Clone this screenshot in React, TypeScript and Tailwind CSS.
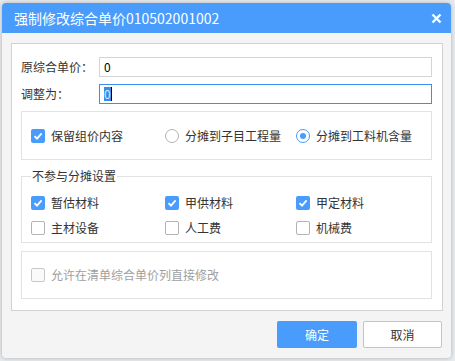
import type { ReactNode } from "react";

const font = { fontFamily: '"Microsoft YaHei", "Noto Sans CJK SC", "Noto Sans", sans-serif' };

function Check({ checked, disabled }: { checked?: boolean; disabled?: boolean }) {
  if (checked) {
    return (
      <span className="w-[14px] h-[14px] rounded-[2px] bg-[#4a9cfc] flex items-center justify-center shrink-0">
        <svg width="10" height="10" viewBox="0 0 10 10">
          <path d="M1.5 5.2 L4 7.6 L8.6 2.4" fill="none" stroke="#fff" strokeWidth="1.8" />
        </svg>
      </span>
    );
  }
  return (
    <span
      className={`w-[14px] h-[14px] rounded-[2px] border shrink-0 ${
        disabled ? "border-[#c8c8c8] bg-[#fafafa]" : "border-[#b4b4b4] bg-white"
      }`}
    />
  );
}

function Radio({ checked }: { checked?: boolean }) {
  return (
    <span
      className={`w-[14px] h-[14px] rounded-full border flex items-center justify-center shrink-0 ${
        checked ? "border-[#4a9cfc]" : "border-[#b4b4b4]"
      } bg-white`}
    >
      {checked && <span className="w-[6px] h-[6px] rounded-full bg-[#4a9cfc]" />}
    </span>
  );
}

function Item({ box, label, disabled }: { box: ReactNode; label: string; disabled?: boolean }) {
  return (
    <div className="flex items-center gap-[6px] h-[16px]">
      {box}
      <span className={`text-[12px] leading-none ${disabled ? "text-[#a0a0a0]" : "text-[#333]"}`}>{label}</span>
    </div>
  );
}

export default function App() {
  return (
    <div className="w-[455px] h-[361px] bg-[#e8ebee] pt-[3px] pl-[2px]" style={font}>
      <div className="w-[449px] h-[355px] rounded-[4px] bg-[#f4f4f4] shadow-[0_0_4px_rgba(0,0,0,0.25)] flex flex-col overflow-hidden">
        <header className="h-[30px] bg-[#4a9cfc] flex items-center justify-between pl-[12px] pr-[9px]">
          <span className="text-white text-[14px] leading-none">强制修改综合单价010502001002</span>
          <svg width="11" height="11" viewBox="0 0 11 11">
            <path d="M1.5 1.5 L9.5 9.5 M9.5 1.5 L1.5 9.5" stroke="#fff" strokeWidth="2.4" />
          </svg>
        </header>

        <div className="pt-[10px] pl-[9px] pr-[8px]">
          <div className="h-[268px] bg-white border border-[#d2d2d2] pt-[13px] pl-[9px] pr-[10px]">
            <div className="flex items-center h-[20px]">
              <span className="w-[78px] text-[12px] text-[#333]">原综合单价：</span>
              <div className="flex-1 h-[20px] border border-[#d4d4d4] flex items-center pl-[4px] text-[12px] text-black">
                0
              </div>
            </div>
            <div className="flex items-center h-[20px] mt-[7px]">
              <span className="w-[78px] text-[12px] text-[#333]">调整为：</span>
              <div className="flex-1 h-[20px] border border-[#3c8ef0] flex items-center pl-[4px] text-[12px]">
                <span className="bg-[#3a8ee6] text-[#dbe9ff] leading-[14px]">0</span>
                <span className="w-px h-[14px] bg-black" />
              </div>
            </div>

            <div className="mt-[7px] h-[49px] border border-[#e2e2e2] grid grid-cols-[134px_131px_1fr] items-center pl-[9px]">
              <Item box={<Check checked />} label="保留组价内容" />
              <Item box={<Radio />} label="分摊到子目工程量" />
              <Item box={<Radio checked />} label="分摊到工料机含量" />
            </div>

            <fieldset className="mt-[8px] h-[75px] border border-[#e2e2e2] pl-[9px]">
              <legend className="px-[1px] text-[12px] leading-[16px] text-[#333]">不参与分摊设置</legend>
              <div className="grid grid-cols-[134px_131px_1fr] gap-y-[9px] pt-[11px]">
                <Item box={<Check checked />} label="暂估材料" />
                <Item box={<Check checked />} label="甲供材料" />
                <Item box={<Check checked />} label="甲定材料" />
                <Item box={<Check />} label="主材设备" />
                <Item box={<Check />} label="人工费" />
                <Item box={<Check />} label="机械费" />
              </div>
            </fieldset>

            <div className="mt-[8px] h-[48px] border border-[#e2e2e2] flex items-center pl-[9px]">
              <Item box={<Check disabled />} label="允许在清单综合单价列直接修改" disabled />
            </div>
          </div>
        </div>

        <div className="flex justify-end gap-[6px] pr-[9px] pt-[10px]">
          <button className="w-[80px] h-[27px] rounded-[2px] bg-[#4a9cfc] text-white text-[12px]">确定</button>
          <button className="w-[79px] h-[27px] rounded-[2px] bg-white border border-[#c4c4c4] text-[#333] text-[12px]">
            取消
          </button>
        </div>
      </div>
    </div>
  );
}
